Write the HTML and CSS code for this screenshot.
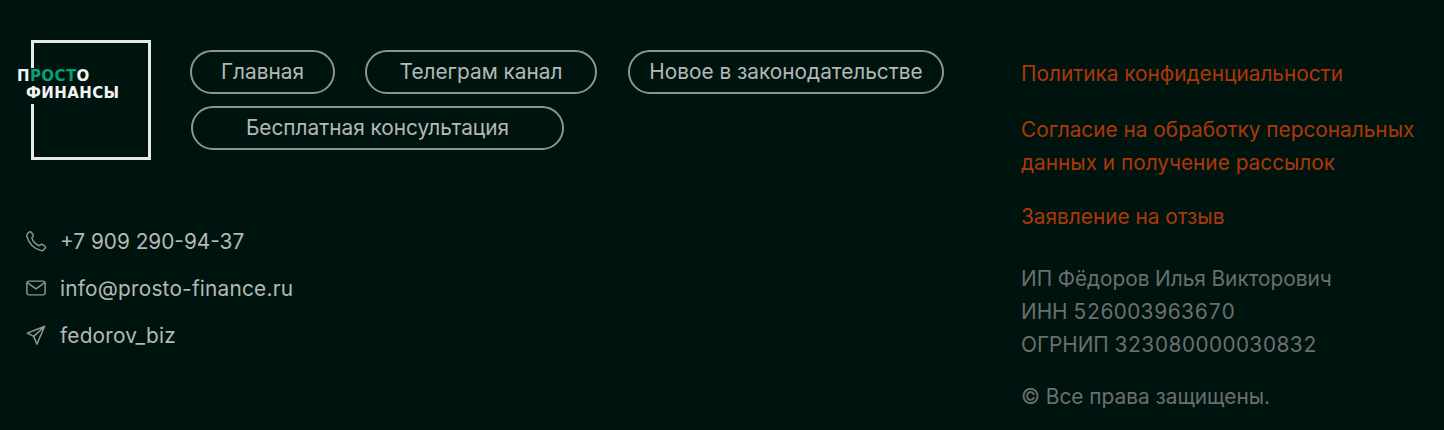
FILE: index.html
```html
<!DOCTYPE html>
<html lang="ru">
<head>
<meta charset="utf-8">
<title>Просто Финансы</title>
<link rel="stylesheet" href="styles.css">
</head>
<body>
<footer class="footer">
  <div class="main">
    <div class="top">
      <div class="logo">
        <div class="logo-text">
          <div class="logo-line1">П<span class="green">РОСТ</span>О</div>
          <div class="logo-line2">ФИНАНСЫ</div>
        </div>
      </div>
      <nav class="nav">
        <a class="pill p1">Главная</a>
        <a class="pill p2">Телеграм канал</a>
        <a class="pill p3">Новое в законодательстве</a>
        <a class="pill p4">Бесплатная консультация</a>
      </nav>
    </div>
    <ul class="contacts">
      <li class="contact">
        <svg class="icon" viewBox="0 0 24 24" fill="none" stroke="currentColor" stroke-width="1.6" stroke-linecap="round" stroke-linejoin="round"><path d="M2.5 4.2 4.6 2.2c.7-.6 1.7-.5 2.2.2l2 3c.4.6.3 1.3-.2 1.8L7.4 8.4c.7 2.2 1.6 3.9 2.9 5.3 1.4 1.5 3.2 2.7 5.4 3.5l1.2-1.2c.5-.5 1.3-.6 1.9-.2l3 2c.7.5.8 1.5.2 2.2l-2 2c-.6.5-1.4.7-2.2.5-4.2-1-7.5-2.9-10.200-5.700C4.900 14 3 10.500 2 6.500c-.2-.9 0-1.700.5-2.300Z"/></svg>
        <span>+7 909 290-94-37</span>
      </li>
      <li class="contact">
        <svg class="icon" viewBox="0 0 24 24" fill="none" stroke="currentColor" stroke-width="1.6" stroke-linecap="round" stroke-linejoin="round"><rect x="2" y="4.500" width="20" height="15" rx="2.500"/><path d="m2.800 6.500 9.200 6.500 9.200-6.500"/></svg>
        <span class="latin">info@prosto-finance.ru</span>
      </li>
      <li class="contact">
        <svg class="icon" viewBox="0 0 24 24" fill="none" stroke="currentColor" stroke-width="1.6" stroke-linecap="round" stroke-linejoin="round"><path d="M21.500 2.500 2.500 10l7 3.500 3.500 8.500 8.500-19.500ZM9.500 13.500l12-11"/></svg>
        <span class="latin">fedorov_biz</span>
      </li>
    </ul>
  </div>
  <aside class="side">
    <a class="doc doc-first">Политика конфиденциальности</a>
    <a class="doc">Согласие на обработку персональных данных и получение рассылок</a>
    <a class="doc">Заявление на отзыв</a>
    <div class="legal">ИП Фёдоров Илья Викторович<br>ИНН 526003963670<br>ОГРНИП 323080000030832</div>
    <div class="copy">© Все права защищены.</div>
  </aside>
</footer>
</body>
</html>
```
FILE: styles.css
```css
* { box-sizing: border-box; }
html, body { margin: 0; padding: 0; }
body {
  background: #00140f;
  font-family: Inter, "Noto Sans", sans-serif;
  width: 1444px;
  height: 430px;
  overflow: hidden;
}
.footer {
  display: flex;
  justify-content: space-between;
  height: 430px;
  padding: 40px 0 0 25px;
}
.main { display: flex; flex-direction: column; width: 996px; }
.top { display: flex; }
.logo {
  width: 120px;
  height: 120px;
  margin-left: 6px;
  border: 3px solid #e6e9e7;
  position: relative;
  flex: none;
}
.logo-text {
  position: absolute;
  left: -17px;
  top: 25px;
  background: #00140f;
  padding: 0 0 2px 0;
  font-family: "DejaVu Sans", sans-serif;
  font-weight: 700;
  font-size: 15px;
  line-height: 17px;
  letter-spacing: 0.400px;
  color: #f2f4f2;
  white-space: nowrap;
}
.logo-line2 { padding-left: 9px; }
.green { color: #0a9e78; }
.nav {
  display: flex;
  flex-wrap: wrap;
  align-content: flex-start;
  gap: 12px 30px;
  margin: 10px 0 0 39px;
  width: 780px;
}
.pill {
  display: flex;
  align-items: center;
  justify-content: center;
  height: 44px;
  border: 2px solid #8f9492;
  border-radius: 22px;
  color: #b5b9b6;
  font-size: 20.800px;
  white-space: nowrap;
  padding-bottom: 1px;
}
.p1 { width: 145px; }
.p2 { width: 232px; }
.p3 { width: 316px; margin-left: 1px; }
.p4 { width: 373px; margin-left: 1px; }
.contacts {
  list-style: none;
  margin: 69px 0 0;
  padding: 0;
  display: flex;
  flex-direction: column;
  gap: 23px;
}
.contact {
  display: flex;
  align-items: center;
  gap: 13px;
  height: 24px;
  color: #b5b9b6;
  font-size: 20.800px;
}
.latin { letter-spacing: 0.220px; }
.icon { width: 22px; height: 22px; color: #8f9492; flex: none; }
.side {
  width: 423px;
  padding-top: 17px;
  display: flex;
  flex-direction: column;
}
.doc {
  color: #ad3805;
  font-size: 20.800px;
  line-height: 33px;
  margin-bottom: 21px;
  width: 410px;
}
.doc-first { margin-bottom: 23px; }
.legal {
  color: #6a6f6d;
  font-size: 20.800px;
  line-height: 33px;
  margin-top: 8px;
  font-variant-numeric: tabular-nums;
}
.copy {
  color: #6a6f6d;
  font-size: 20.800px;
  line-height: 24px;
  margin-top: 24px;
}
```
